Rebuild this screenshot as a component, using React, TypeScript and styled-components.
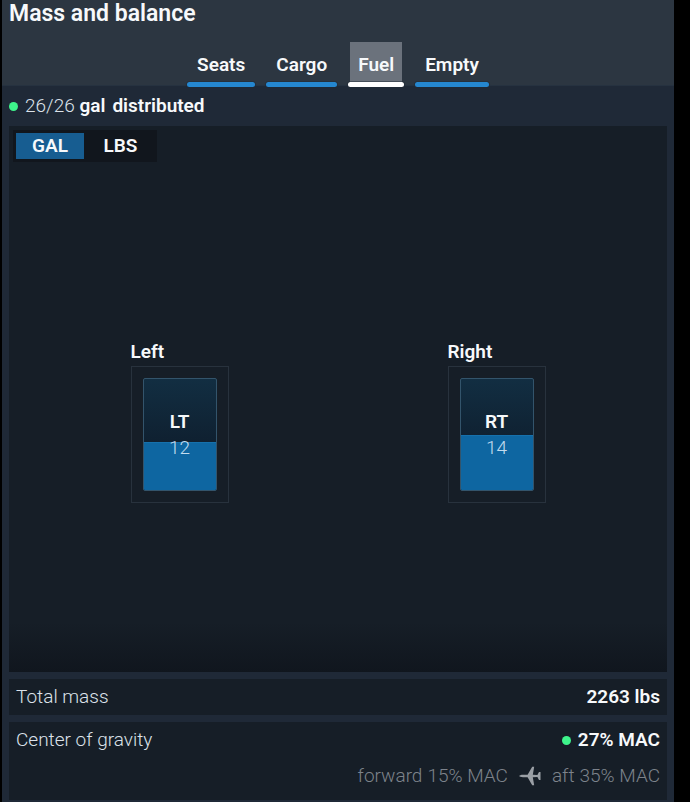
import React, { useState } from "react";
import styled, { createGlobalStyle } from "styled-components";

const GlobalStyle = createGlobalStyle`
  * { box-sizing: border-box; }
  body {
    margin: 0;
    background: #000;
    color: #f7f9fb;
    font-family: Roboto, "Liberation Sans", sans-serif;
    font-size: 19px;
    line-height: 24px;
  }
  button { font: inherit; color: inherit; border: 0; cursor: pointer; }
`;

const Page = styled.main`
  display: flex;
  flex-direction: column;
  min-height: 100vh;
  margin: 0 16px 0 2px;
  padding-bottom: 2px;
  background: #1f2937;
`;

const Header = styled.header`
  background: #2c3641;
  height: 86px;
  border-bottom: 1px solid #263240;
`;

const Title = styled.h1`
  margin: 0;
  padding: 1px 7px 0;
  font-size: 23px;
  line-height: 26px;
  font-weight: 600;
`;

const Tabs = styled.nav`
  display: flex;
  justify-content: center;
  gap: 11px;
  margin-top: 15px;
`;

const Tab = styled.button<{ $active: boolean }>`
  position: relative;
  height: 45px;
  padding: 0 10px;
  font-weight: 600;
  background: ${(p) => (p.$active ? "linear-gradient(#6b727c, #6b727c) center / calc(100% - 4px) 100% no-repeat" : "transparent")};

  &::after {
    content: "";
    position: absolute;
    left: 0;
    right: 0;
    bottom: 0;
    height: 5px;
    border-radius: 3px;
    background: ${(p) => (p.$active ? "#ffffff" : "#2587d0")};
    box-shadow: 0 0 0 1px #202a3680;
  }
`;

const Status = styled.div`
  display: flex;
  align-items: center;
  height: 40px;
  padding: 0 7px;
  gap: 7px;
`;

const Dot = styled.span`
  width: 9px;
  height: 9px;
  border-radius: 50%;
  background: #3ef48b;
`;

const Light = styled.span`
  font-weight: 300;
  color: #dce2ea;
`;

const Strong = styled.strong`
  font-weight: 600;
`;

const Unit = styled(Strong)`
  margin-right: 7px;
`;

const Panel = styled.section`
  margin: 0 7px;
  background: #161e27;
`;

const FuelPanel = styled(Panel)`
  flex: 1;
  display: flex;
  flex-direction: column;
  padding: 4px;
  background: linear-gradient(to bottom, transparent calc(100% - 50px), #10161e), #161e27;
`;

const Toggle = styled.div`
  display: flex;
  align-self: flex-start;
  padding: 3px 0 3px 3px;
  background: #11161d;
`;

const ToggleOption = styled.button<{ $active: boolean }>`
  width: ${(p) => (p.$active ? "68px" : "73px")};
  height: 26px;
  padding: 0;
  font-weight: 600;
  background: ${(p) => (p.$active ? "#175d91" : "transparent")};
`;

const Tanks = styled.div`
  flex: 1;
  display: grid;
  grid-template-columns: 1fr 1fr;
  place-items: center;
  padding: 12px 8px 0;
`;

const TankName = styled.h2`
  margin: 0 0 2px;
  font-size: 19px;
  line-height: 24px;
  font-weight: 600;
`;

const TankFrame = styled.div`
  width: 98px;
  height: 137px;
  padding: 11px;
  border: 1px solid #28323d;
`;

const Gauge = styled.div`
  position: relative;
  display: flex;
  flex-direction: column;
  align-items: center;
  justify-content: center;
  height: 100%;
  padding-top: 1px;
  border: 1px solid #33546b;
  border-radius: 2px;
  overflow: hidden;
  background: linear-gradient(#122e42, #0f2030 58%);
  line-height: 26px;
`;

const Fill = styled.div`
  position: absolute;
  left: 0;
  right: 0;
  bottom: 0;
  background: #0e66a1;
  border-top: 1px solid #1671ac;
`;

const Code = styled(Strong)`
  position: relative;
`;

const Amount = styled(Light)`
  position: relative;
  color: #c3dcef;
`;

const Summary = styled(Panel)`
  margin-top: 7px;
  padding: 6px 7px;
`;

const Row = styled.div`
  display: flex;
  align-items: center;
  justify-content: space-between;
`;

const Value = styled.div`
  display: flex;
  align-items: center;
  gap: 7px;
`;

const Limits = styled.div`
  display: flex;
  align-items: center;
  justify-content: flex-end;
  gap: 11px;
  padding: 12px 0 6px;
  font-weight: 300;
  color: #7d838b;
`;

const Limit = styled.span`
  display: flex;
  gap: 5px;
`;

const PlaneIcon = () => (
  <svg width="22" height="20" viewBox="0 0 22 20" fill="#9a9fa5" aria-hidden="true">
    <path d="M0.3 10C0.3 9.4 2 8.8 4 8.8H8.6L13.2 0.8H15.2L13.8 8.8L18.4 9L20 6H21.5V14H20L18.4 11L13.8 11.2L15.2 19.2H13.2L8.6 11.2H4C2 11.2 0.3 10.6 0.3 10Z" />
  </svg>
);

const tabs = ["Seats", "Cargo", "Fuel", "Empty"];
const units = ["GAL", "LBS"];
const tanks = [
  { name: "Left", code: "LT", amount: 12, level: 43 },
  { name: "Right", code: "RT", amount: 14, level: 49 },
];

export default function App() {
  const [tab, setTab] = useState("Fuel");
  const [unit, setUnit] = useState("GAL");

  return (
    <>
      <GlobalStyle />
      <Page>
        <Header>
          <Title>Mass and balance</Title>
          <Tabs>
            {tabs.map((name) => (
              <Tab key={name} type="button" $active={name === tab} aria-pressed={name === tab} onClick={() => setTab(name)}>
                {name}
              </Tab>
            ))}
          </Tabs>
        </Header>
        <Status>
          <Dot />
          <div>
            <Light>26/26</Light> <Unit>gal</Unit>
            <Strong>distributed</Strong>
          </div>
        </Status>
        <FuelPanel>
          <Toggle>
            {units.map((name) => (
              <ToggleOption key={name} type="button" $active={name === unit} aria-pressed={name === unit} onClick={() => setUnit(name)}>
                {name}
              </ToggleOption>
            ))}
          </Toggle>
          <Tanks>
            {tanks.map((tank) => (
              <div key={tank.code}>
                <TankName>{tank.name}</TankName>
                <TankFrame>
                  <Gauge>
                    <Fill style={{ height: `${tank.level}%` }} />
                    <Code>{tank.code}</Code>
                    <Amount>{tank.amount}</Amount>
                  </Gauge>
                </TankFrame>
              </div>
            ))}
          </Tanks>
        </FuelPanel>
        <Summary>
          <Row>
            <Light>Total mass</Light>
            <Strong>2263 lbs</Strong>
          </Row>
        </Summary>
        <Summary>
          <Row>
            <Light>Center of gravity</Light>
            <Value>
              <Dot />
              <Strong>27% MAC</Strong>
            </Value>
          </Row>
          <Limits>
            <Limit>
              <span>forward</span>
              <span>15% MAC</span>
            </Limit>
            <PlaneIcon />
            <Limit>
              <span>aft</span>
              <span>35% MAC</span>
            </Limit>
          </Limits>
        </Summary>
      </Page>
    </>
  );
}
